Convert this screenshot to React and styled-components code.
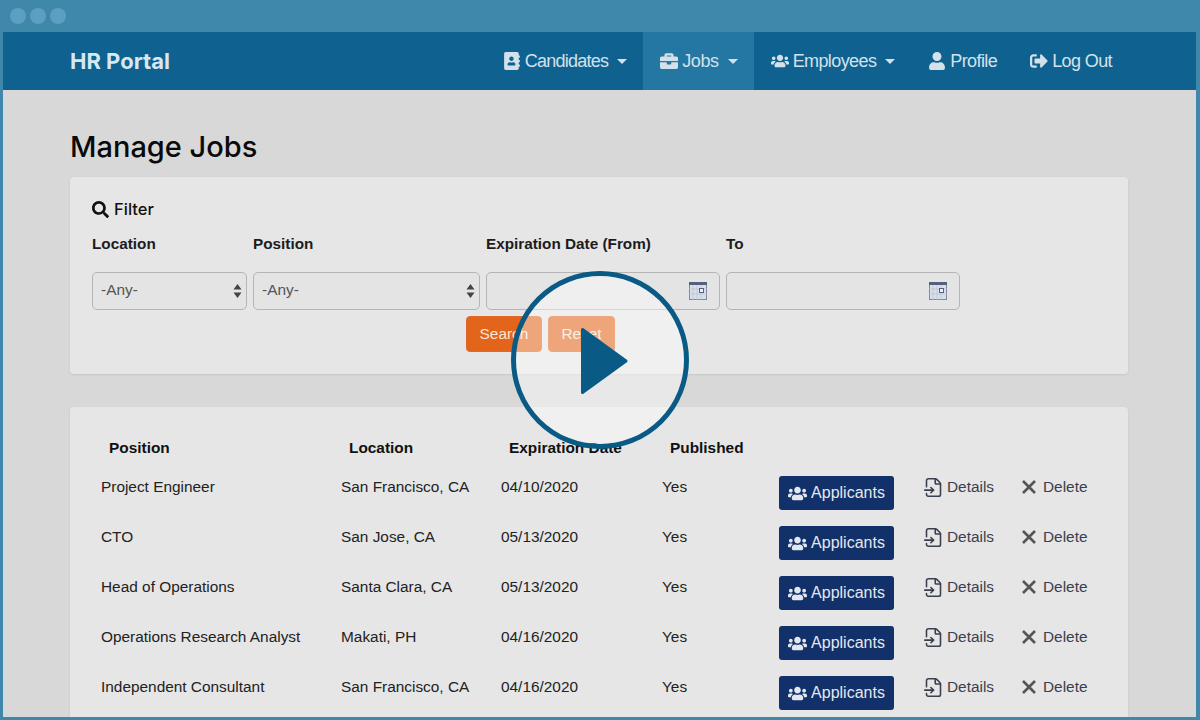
import React from 'react';
import styled, { createGlobalStyle } from 'styled-components';
import { FaAddressBook, FaBriefcase, FaUsers, FaUser, FaSignOutAlt, FaSearch } from 'react-icons/fa';
import { FileInput } from 'lucide-react';

const GlobalStyle = createGlobalStyle`
  html, body {
    margin: 0;
    padding: 0;
    background: #3f87ab;
    font-family: "Liberation Sans", Arial, sans-serif;
  }
`;

const Frame = styled.div`
  position: relative;
  width: 1200px;
  height: 720px;
  box-sizing: border-box;
  padding: 0 4px 3px 3px;
  display: flex;
  flex-direction: column;
  background: #3f87ab;
  overflow: hidden;
`;

const TitleBar = styled.div`
  height: 32px;
  flex: none;
  display: flex;
  align-items: center;
  gap: 4px;
  padding-left: 7px;
  padding-bottom: 1px;
  box-sizing: border-box;
`;

const Dot = styled.span`
  width: 16px;
  height: 16px;
  border-radius: 50%;
  background: #5ba0c2;
`;

const Page = styled.div`
  flex: 1;
  min-height: 0;
  display: flex;
  flex-direction: column;
  background: #d8d8d8;
  overflow: hidden;
`;

const NavBar = styled.nav`
  height: 58px;
  flex: none;
  box-sizing: border-box;
  padding: 0 68px 0 67px;
  display: flex;
  align-items: stretch;
  justify-content: space-between;
  background: #0f6190;
`;

const Brand = styled.div`
  display: flex;
  align-items: center;
  font-family: Inter, sans-serif;
  font-size: 22px;
  font-weight: 700;
  color: #d6e8f1;
`;

const NavList = styled.div`
  display: flex;
  align-items: stretch;
`;

const NavItem = styled.a`
  display: flex;
  align-items: center;
  gap: 4px;
  padding: 0 16px 0 17px;
  font-size: 18px;
  letter-spacing: ${(p) => p.$tracking || -0.6}px;
  color: #d3e1ea;
  background: ${(p) => (p.$active ? '#2476a3' : 'transparent')};

  svg {
    width: auto;
    height: 18px;
    flex: none;
  }
`;

const Caret = styled.span`
  width: 0;
  height: 0;
  margin-left: 5px;
  border-left: 5.5px solid transparent;
  border-right: 5.5px solid transparent;
  border-top: 5.5px solid #d3e1ea;
`;

const Main = styled.main`
  padding: 39px 68px 0 67px;
  display: flex;
  flex-direction: column;
`;

const Heading = styled.h1`
  margin: 0 0 12px;
  font-family: Inter, sans-serif;
  font-size: 29px;
  line-height: 36px;
  font-weight: 500;
  color: #0a0a0a;
`;

const Card = styled.section`
  background: #e6e6e6;
  border-radius: 4px;
  box-shadow: 0 1px 3px rgba(0, 0, 0, 0.08);
`;

const FilterCard = styled(Card)`
  padding: 21px 22px 22px;
  margin-bottom: 33px;
`;

const FilterTitle = styled.div`
  display: flex;
  align-items: center;
  gap: 5px;
  font-family: Inter, sans-serif;
  font-size: 16.5px;
  line-height: 22px;
  font-weight: 500;
  color: #111;
`;

const FieldGrid = styled.div`
  margin-top: 15px;
  display: grid;
  grid-template-columns: 155px 227px 234px 234px;
  column-gap: 6px;
  row-gap: 19px;
`;

const FieldLabel = styled.label`
  font-size: 15.3px;
  line-height: 18px;
  font-weight: 700;
  color: #1c1c1c;
`;

const Control = styled.div`
  position: relative;
  height: 38px;
`;

const Select = styled.select`
  width: 100%;
  height: 100%;
  box-sizing: border-box;
  padding: 0 8px 3px;
  appearance: none;
  font-family: inherit;
  font-size: 15.4px;
  color: #555;
  background: #e4e4e4;
  border: 1px solid #b5b5b5;
  border-radius: 5px;
`;

const DateInput = styled.input`
  width: 100%;
  height: 100%;
  box-sizing: border-box;
  background: #e4e4e4;
  border: 1px solid #b5b5b5;
  border-radius: 5px;
`;

const ControlIcon = styled.svg`
  position: absolute;
  top: 50%;
  right: ${(p) => p.$right}px;
  transform: translateY(-50%);
  pointer-events: none;
`;

const ButtonRow = styled.div`
  margin: 6px 0 0 374px;
  display: flex;
  gap: 6px;
`;

const FilterButton = styled.button`
  height: 36px;
  width: ${(p) => p.$width}px;
  padding: 0 0 1px;
  font-family: inherit;
  font-size: 15.4px;
  color: #f7e5d8;
  background: #e3651b;
  border: 1px solid #e0692a;
  border-radius: 4px;
`;

const TableCard = styled(Card)`
  padding: 31px 0 40px 31px;
`;

const Row = styled.div`
  display: grid;
  grid-template-columns: 240px 160px 161px 117px 146px 96px 80px;
  height: 50px;
  font-size: 15.4px;
  line-height: 50px;
  color: #222;
`;

const HeaderRow = styled(Row)`
  height: 20px;
  line-height: 20px;
  margin-bottom: 4px;
`;

const HeaderCell = styled.div`
  padding-left: 8px;
  font-weight: 700;
  color: #111;
`;

const ApplicantsButton = styled.button`
  width: 115px;
  height: 34px;
  margin-top: 14px;
  padding: 0;
  display: flex;
  align-items: center;
  justify-content: center;
  gap: 4px;
  font-family: inherit;
  font-size: 16px;
  color: #e3e8f0;
  background: #12306a;
  border: none;
  border-radius: 3px;

  svg {
    font-size: 19px;
  }
`;

const RowAction = styled.a`
  display: flex;
  align-items: center;
  color: #3a404e;
`;

const DetailsIcon = styled(FileInput)`
  margin: 0 3px 0 -2px;
`;

const DeleteIcon = styled.svg`
  margin-right: 6px;
  flex: none;
`;

const Overlay = styled.div`
  position: absolute;
  left: 50%;
  top: 50%;
  width: 178px;
  height: 178px;
  box-sizing: border-box;
  transform: translate(-50%, -50%);
  display: flex;
  align-items: center;
  justify-content: center;
  background: rgba(255, 255, 255, 0.42);
  border: 5px solid #0a5a86;
  border-radius: 50%;
`;

const jobs = [
  ['Project Engineer', 'San Francisco, CA', '04/10/2020'],
  ['CTO', 'San Jose, CA', '05/13/2020'],
  ['Head of Operations', 'Santa Clara, CA', '05/13/2020'],
  ['Operations Research Analyst', 'Makati, PH', '04/16/2020'],
  ['Independent Consultant', 'San Francisco, CA', '04/16/2020'],
];

const SortArrows = () => (
  <ControlIcon $right={5} width="9" height="16" viewBox="0 0 9 16">
    <path d="M4.5 1 L8.5 6.5 H0.5 Z M4.5 15 L0.5 9.5 H8.5 Z" fill="#444" />
  </ControlIcon>
);

const CalendarIcon = () => (
  <ControlIcon $right={13} width="18" height="18" viewBox="0 0 18 18">
    <rect x="0.5" y="0.5" width="17" height="17" fill="#d9e0ea" stroke="#7d8a9e" />
    <rect x="0" y="0" width="18" height="3" fill="#55617a" />
    <path d="M4 3 V18 M8 3 V18 M12 3 V18 M0 7 H18 M0 12 H18" stroke="#b4c0d2" strokeWidth="0.7" />
    <rect x="10.5" y="6.5" width="4" height="4" fill="#eef1f6" stroke="#55617a" />
  </ControlIcon>
);

const App = () => {
  return (
    <Frame>
      <GlobalStyle />
      <TitleBar>
        <Dot />
        <Dot />
        <Dot />
      </TitleBar>
      <Page>
        <NavBar>
          <Brand>HR Portal</Brand>
          <NavList>
            <NavItem $tracking={-0.75}><FaAddressBook />Candidates<Caret /></NavItem>
            <NavItem $active $tracking={-0.4}><FaBriefcase />Jobs<Caret /></NavItem>
            <NavItem><FaUsers />Employees<Caret /></NavItem>
            <NavItem><FaUser />Profile</NavItem>
            <NavItem><FaSignOutAlt />Log Out</NavItem>
          </NavList>
        </NavBar>
        <Main>
          <Heading>Manage Jobs</Heading>
          <FilterCard>
            <FilterTitle><FaSearch size={17} />Filter</FilterTitle>
            <FieldGrid>
              <FieldLabel>Location</FieldLabel>
              <FieldLabel>Position</FieldLabel>
              <FieldLabel>Expiration Date (From)</FieldLabel>
              <FieldLabel>To</FieldLabel>
              <Control>
                <Select defaultValue="any"><option value="any">-Any-</option></Select>
                <SortArrows />
              </Control>
              <Control>
                <Select defaultValue="any"><option value="any">-Any-</option></Select>
                <SortArrows />
              </Control>
              <Control>
                <DateInput />
                <CalendarIcon />
              </Control>
              <Control>
                <DateInput />
                <CalendarIcon />
              </Control>
            </FieldGrid>
            <ButtonRow>
              <FilterButton $width={76}>Search</FilterButton>
              <FilterButton $width={67}>Reset</FilterButton>
            </ButtonRow>
          </FilterCard>
          <TableCard>
            <HeaderRow>
              <HeaderCell>Position</HeaderCell>
              <HeaderCell>Location</HeaderCell>
              <HeaderCell>Expiration Date</HeaderCell>
              <HeaderCell>Published</HeaderCell>
            </HeaderRow>
            {jobs.map(([position, location, date]) => (
              <Row key={position}>
                <div>{position}</div>
                <div>{location}</div>
                <div>{date}</div>
                <div>Yes</div>
                <div>
                  <ApplicantsButton><FaUsers />Applicants</ApplicantsButton>
                </div>
                <RowAction><DetailsIcon size={21} strokeWidth={1.8} />Details</RowAction>
                <RowAction>
                  <DeleteIcon width="16" height="16" viewBox="0 0 16 16">
                    <path d="M2 2 L14 14 M14 2 L2 14" stroke="#555" strokeWidth="2.6" fill="none" />
                  </DeleteIcon>
                  Delete
                </RowAction>
              </Row>
            ))}
          </TableCard>
        </Main>
      </Page>
      <Overlay>
        <svg width="64" height="84" viewBox="0 0 64 84">
          <path d="M14.5 11.5 L58 43 L14.5 74.5 Z" fill="#0a5a86" stroke="#0a5a86" strokeWidth="3" strokeLinejoin="round" />
        </svg>
      </Overlay>
    </Frame>
  );
};

export default App;
